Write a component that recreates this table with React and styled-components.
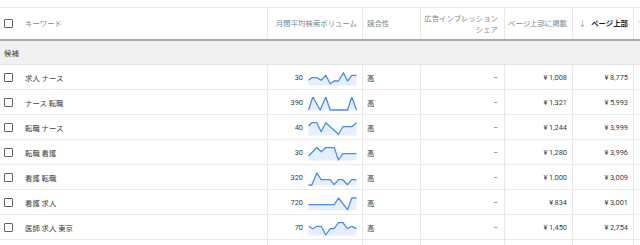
import React from 'react';
import styled, { createGlobalStyle } from 'styled-components';

const GlobalStyle = createGlobalStyle`
  body {
    margin: 0;
    background: #fff;
    font-family: Roboto, "Noto Sans CJK JP", sans-serif;
    overflow: hidden;
  }
`;

const COLS = '267px 95px 58px 84px 68px 61px 1fr';

const rows = [
    { kw: '求人 ナース', vol: '30', low: '¥\u20091,008', high: '¥\u20098,775',
      pts: [[0, 8.3], [3.3, 5.7], [8.3, 5.7], [12.7, 8.3], [17.3, 3.3], [21.7, 11.7], [25.7, 9], [30, 9], [35, 0.7], [39, 9], [43.3, 3.3], [48, 3.3]] },
    { kw: 'ナース 転職', vol: '390', low: '¥\u20091,321', high: '¥\u20095,993',
      pts: [[0, 13], [4.3, 0], [11.7, 13], [17.3, 0], [21.7, 13], [39, 13], [43.3, 0], [48, 13]] },
    { kw: '転職 ナース', vol: '40', low: '¥\u20091,244', high: '¥\u20093,999',
      pts: [[0, 4], [3.3, 0.7], [8.3, 0.7], [12.7, 9.7], [17.3, 0.7], [30, 12.3], [34.3, 4.7], [43.3, 4.7], [48, 0.7]] },
    { kw: '転職 看護', vol: '30', low: '¥\u20091,280', high: '¥\u20093,996',
      pts: [[0, 9], [8.3, 0.5], [12.7, 4.7], [17.3, 0.5], [25.7, 0.5], [30, 13], [34.3, 6.7], [48, 6.7]] },
    { kw: '看護 転職', vol: '320', low: '¥\u20091,000', high: '¥\u20093,009',
      pts: [[0, 13], [3.3, 13], [8.3, 1], [12.7, 7.7], [21.7, 7.7], [25.7, 12.7], [30, 7.7], [34.3, 7.7], [39, 12.7], [43.3, 7.7], [48, 7.7]] },
    { kw: '看護 求人', vol: '720', low: '¥\u2009834', high: '¥\u20093,001',
      pts: [[0, 7.7], [25.7, 7.7], [30, 1], [39, 12.7], [43.3, 1], [48, 1]] },
    { kw: '医師 求人 東京', vol: '70', low: '¥\u20091,450', high: '¥\u20092,754',
      pts: [[0, 4.3], [4.3, 6.7], [8.3, 4.3], [12.7, 4.3], [17.3, 13], [21.7, 6.7], [25.7, 6.7], [30, 0.5], [34.3, 0.5], [39, 6.7], [43.3, 4.3], [48, 6.7]] },
];

const Page = styled.div`
    width: 640px;
    padding-top: 7px;
`;

const Table = styled.div`
    border-top: 1px solid #ececec;
`;

const HeaderRow = styled.div`
    display: grid;
    grid-template-columns: ${COLS};
    height: 31px;
    border-bottom: 2px solid #a9a9a9;
`;

const HeadCell = styled.div`
    display: flex;
    align-items: center;
    justify-content: ${p => p.$left ? 'flex-start' : 'flex-end'};
    gap: ${p => p.$gap || 0}px;
    padding: 0 ${p => p.$pad || 5}px 0 ${p => p.$left ? 4 : 2}px;
    text-align: ${p => p.$left ? 'left' : 'right'};
    font-size: 7.4px;
    line-height: 11px;
    color: ${p => p.$active ? '#202124' : '#80868b'};
    font-weight: ${p => p.$active ? 700 : 400};
    border-left: ${p => p.$first ? 'none' : '1px solid #e8e8e8'};
    white-space: nowrap;
    overflow: hidden;
`;

const SortArrow = styled.span`
    font-weight: 400;
    color: #80868b;
    margin-right: 5px;
`;

const GroupRow = styled.div`
    height: 23px;
    display: flex;
    align-items: center;
    padding-left: 4px;
    background: #f1f1f1;
    border-bottom: 1px solid #e3e3e3;
    font-size: 7.4px;
    color: #3c4043;
`;

const Row = styled.div`
    display: grid;
    grid-template-columns: ${COLS};
    height: 24px;
    border-bottom: 1px solid #ebebeb;
`;

const Cell = styled.div`
    display: flex;
    align-items: center;
    justify-content: ${p => p.$left ? 'flex-start' : 'flex-end'};
    gap: ${p => p.$gap || 0}px;
    padding: 0 ${p => p.$pad || 5}px 0 ${p => p.$left ? 4 : 5}px;
    font-size: 7.4px;
    color: ${p => p.$muted ? '#5f6368' : '#3c4043'};
    border-left: ${p => p.$first ? 'none' : '1px solid #e8e8e8'};
    white-space: nowrap;
    overflow: hidden;
`;

const Box = styled.span`
    flex: none;
    width: 9px;
    height: 9px;
    box-sizing: border-box;
    border: 1.5px solid #5f6368;
    border-radius: 1px;
`;

const Keyword = styled.span`
    margin-left: 12px;
`;

const Spark = styled.svg`
    flex: none;
    margin-top: 3px;
`;

const Sparkline = ({ pts }) => {
    const line = pts.map((p, i) => `${i ? 'L' : 'M'}${p[0]},${p[1]}`).join(' ');
    const area = `${line} L48,13.5 L0,13.5 Z`;
    return (
        <Spark width="49" height="14" viewBox="-0.5 0 49 14">
            <path d={area} fill="#e6effd" />
            <path d={line} fill="none" stroke="#4a8af4" strokeWidth="1.3" strokeLinejoin="round" />
        </Spark>
    );
};

const App = () => {
    return (
        <Page>
            <GlobalStyle />
            <Table>
                <HeaderRow>
                    <HeadCell $first $left $gap={12}><Box />キーワード</HeadCell>
                    <HeadCell>月間平均検索ボリューム</HeadCell>
                    <HeadCell $left>競合性</HeadCell>
                    <HeadCell $pad={6}>広告インプレッション<br />シェア</HeadCell>
                    <HeadCell>ページ上部に掲載</HeadCell>
                    <HeadCell $active><SortArrow>↓</SortArrow>ページ上部</HeadCell>
                    <HeadCell $left>ア</HeadCell>
                </HeaderRow>
                <GroupRow>候補</GroupRow>
                {rows.map(r => (
                    <Row key={r.kw}>
                        <Cell $first $left><Box /><Keyword>{r.kw}</Keyword></Cell>
                        <Cell $gap={5}>{r.vol}<Sparkline pts={r.pts} /></Cell>
                        <Cell $left>高</Cell>
                        <Cell $muted $pad={6}>–</Cell>
                        <Cell>{r.low}</Cell>
                        <Cell>{r.high}</Cell>
                        <Cell $left />
                    </Row>
                ))}
                <Row>
                    <Cell $first $left />
                    <Cell />
                    <Cell />
                    <Cell />
                    <Cell />
                    <Cell />
                    <Cell />
                </Row>
            </Table>
        </Page>
    );
};

export default App;
